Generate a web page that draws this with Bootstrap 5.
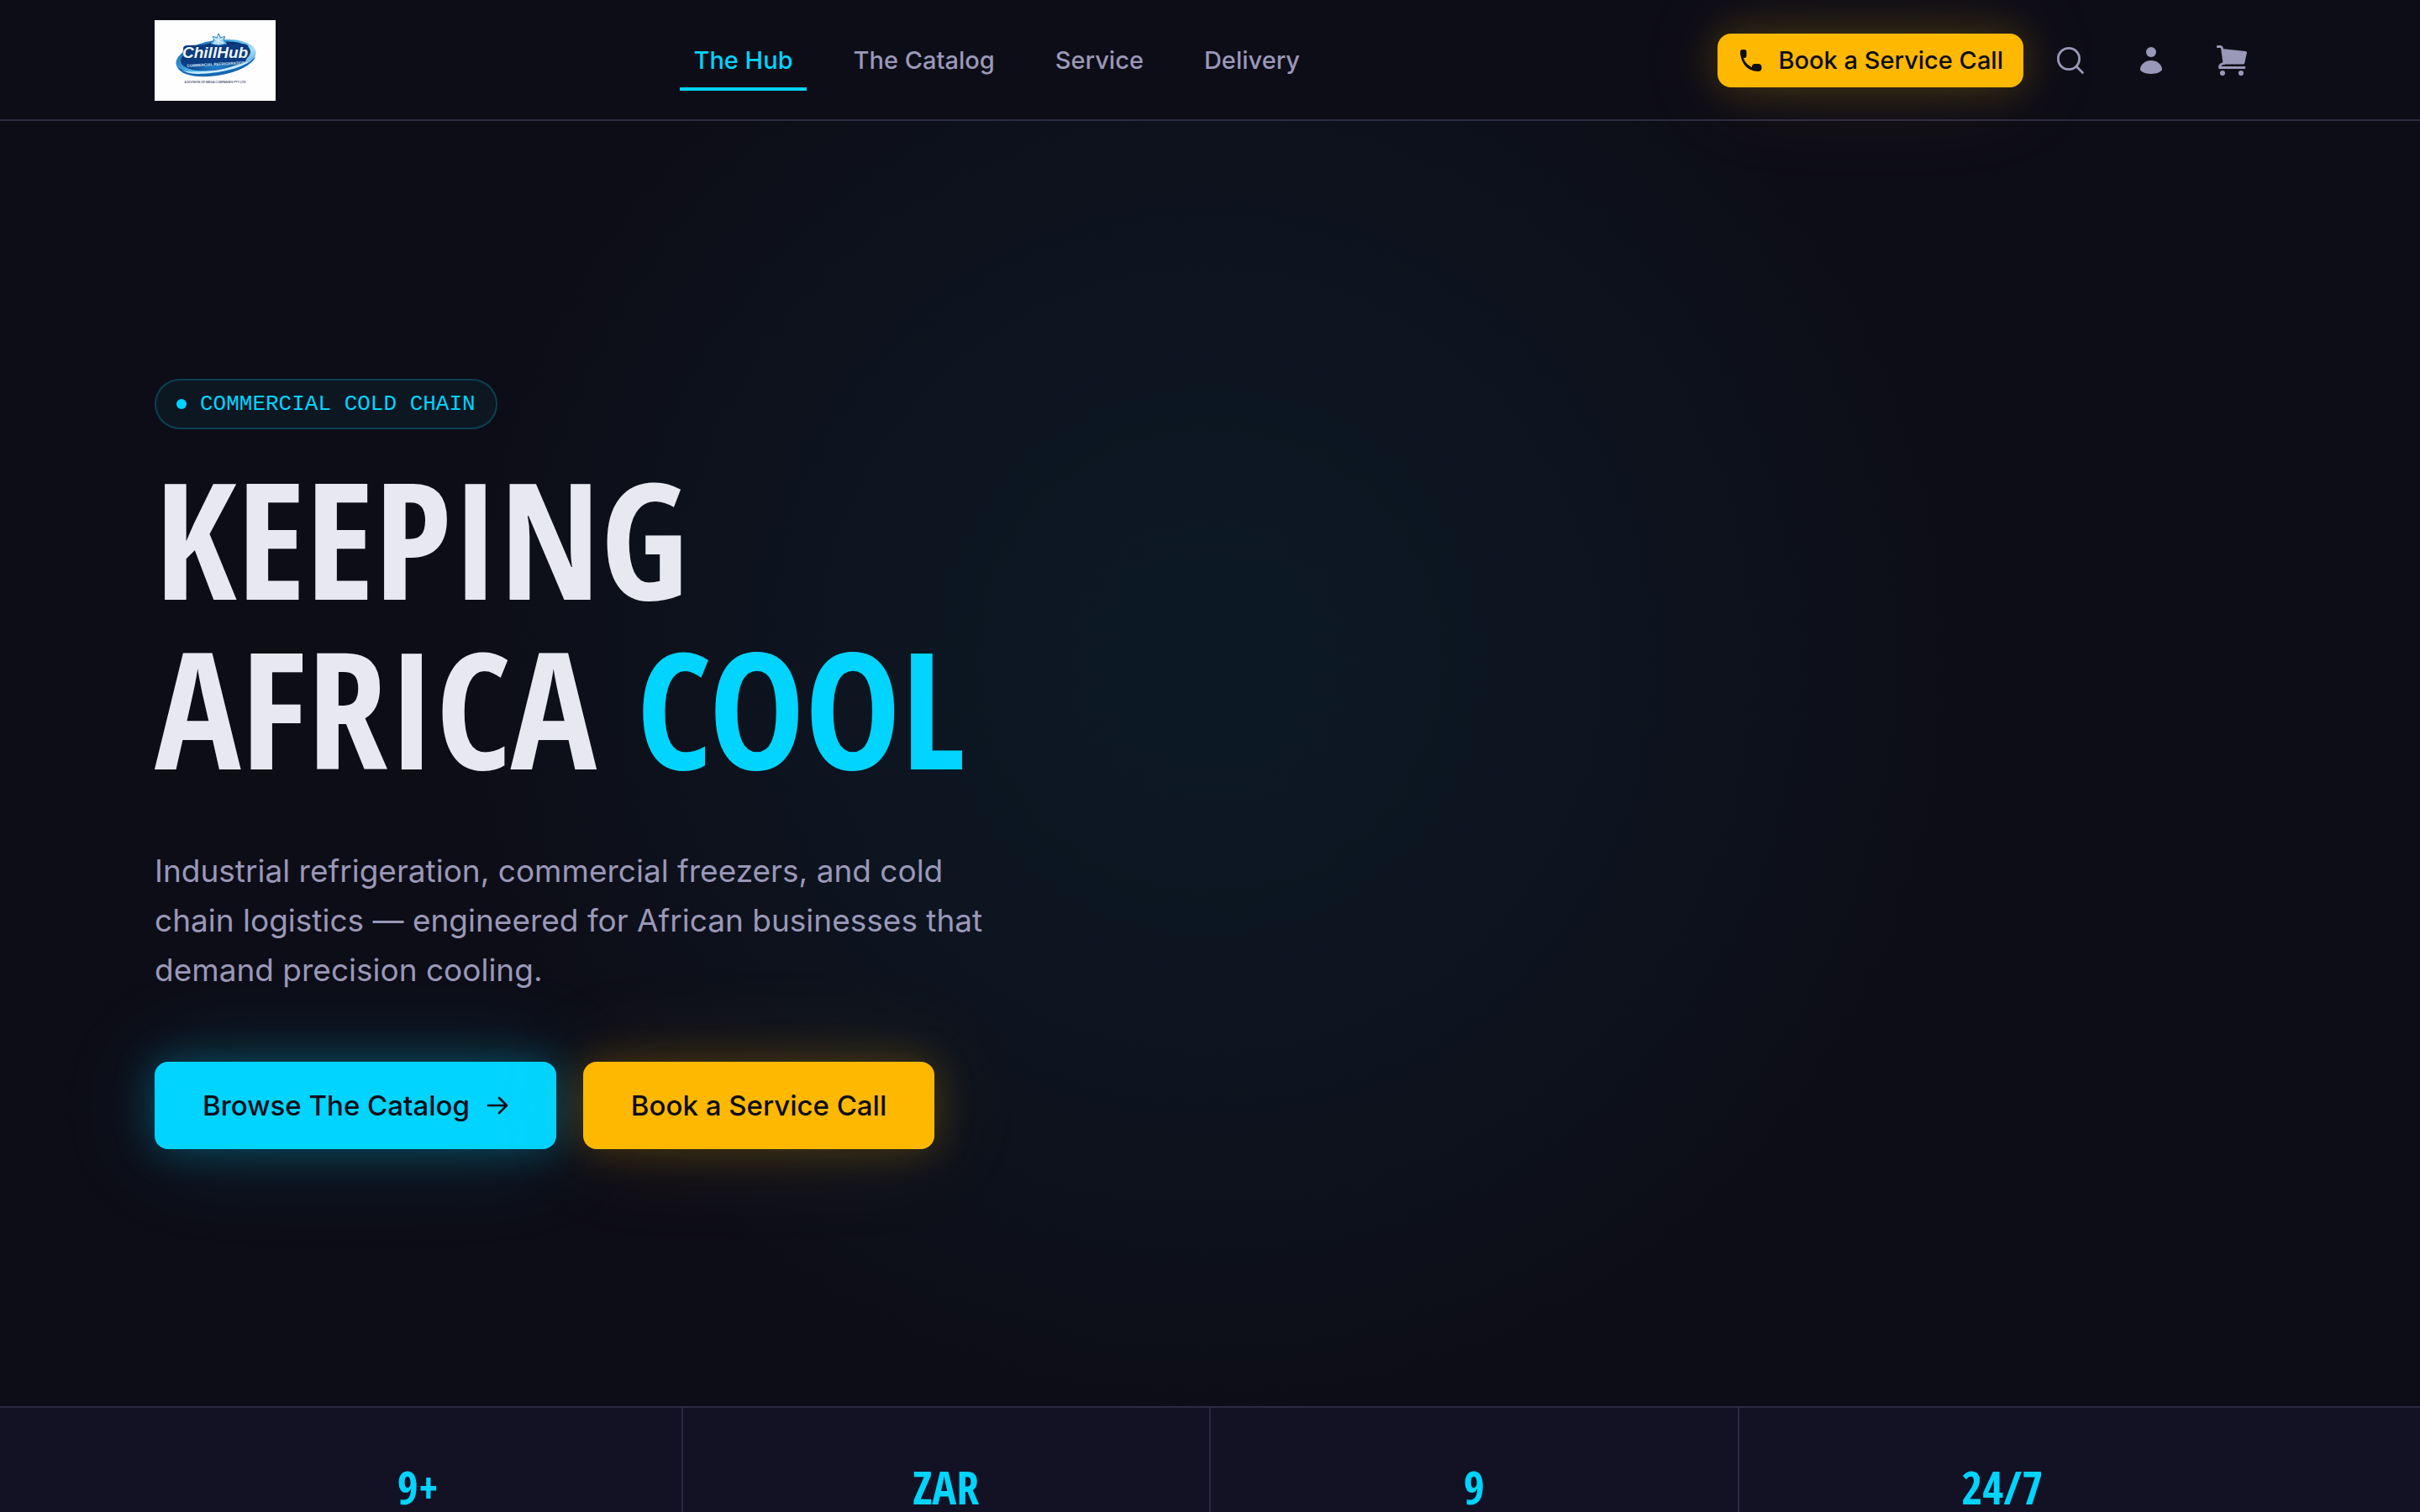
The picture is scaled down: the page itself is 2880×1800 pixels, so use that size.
<!DOCTYPE html>
<html lang="en">
<head>
<meta charset="utf-8">
<meta name="viewport" content="width=device-width, initial-scale=1">
<title>ChillHub – Commercial Refrigeration</title>
<link href="https://cdn.jsdelivr.net/npm/bootstrap@5.3.0/dist/css/bootstrap.min.css" rel="stylesheet">
<style>
  :root {
    --ink: #0d0d17;
    --panel: #121224;
    --line: #2a2a45;
    --ice: #00d4ff;
    --amber: #ffb800;
    --muted: #9a98b8;
    --display: "Open Sans Condensed", "Roboto Condensed", "Open Sans", sans-serif;
  }
  body { background: var(--ink); color: #e8e8f0; font-family: Inter, "Open Sans", sans-serif; }
  .shell { width: 100%; max-width: 2560px; margin-inline: auto; padding-inline: 24px; }

  .site-header { background: var(--ink); box-shadow: inset 0 -2px var(--line); z-index: 2; }
  .site-header .shell { padding-block: 24px; }
  .brand-tile { width: 144px; height: 96px; }
  .site-menu { gap: 40px; }
  .site-menu .nav-link { padding: 16px 16px 12px; font-size: 29px; line-height: 40px; font-weight: 500; color: var(--muted); border-bottom: 4px solid transparent; }
  .site-menu .nav-link.active { color: var(--ice); border-bottom-color: var(--ice); }

  .btn-glow { border: 0; border-radius: 16px; color: var(--ink); font-weight: 500; display: inline-flex; align-items: center; white-space: nowrap; }
  .btn-amber, .btn-amber:hover { background: var(--amber); color: var(--ink); box-shadow: 0 0 48px rgba(255,184,0,.22), 0 0 120px rgba(255,184,0,.12); }
  .btn-ice, .btn-ice:hover { background: var(--ice); color: var(--ink); box-shadow: 0 0 48px rgba(0,212,255,.28), 0 0 120px rgba(0,212,255,.16); }
  .btn-call { font-size: 29px; line-height: 40px; padding: 12px 24px; gap: 16px; }
  .btn-cta { font-size: 33px; line-height: 48px; padding: 28px 57px; gap: 20px; }
  .btn-tool { width: 80px; height: 80px; padding: 0; border: 0; color: var(--muted); display: inline-flex; align-items: center; justify-content: center; }

  .hero { min-height: 85vh; background: radial-gradient(circle at 50% 42%, rgba(0,212,255,.058), rgba(0,212,255,.05) 15%, rgba(0,212,255,.026) 34%, transparent 54%); }
  .hero-tag { border: 2px solid rgba(0,212,255,.22); background: rgba(0,212,255,.05); border-radius: 30px; padding: 8px 24px; gap: 16px; font: 26px/40px "Liberation Mono", monospace; color: var(--ice); text-transform: uppercase; margin-bottom: 28px; }
  .tag-dot { width: 12px; height: 12px; border-radius: 50%; background: var(--ice); }
  .hero-title { font-family: var(--display); font-weight: 700; font-size: 192px; line-height: 202px; margin-bottom: 64px; color: #e8e8f0; }
  .hero-title span { color: var(--ice); }
  .hero-text { max-width: 1000px; font-size: 37px; line-height: 59px; font-weight: 400; color: var(--muted); margin-bottom: 80px; }
  .hero-actions { gap: 32px; }

  .stats { background: var(--panel); border-top: 2px solid var(--line); }
  .stat-cell { padding-top: 64px; text-align: center; }
  .stat-cell:not(:last-child) { border-right: 2px solid var(--line); }
  .stat-value { font-family: var(--display); font-weight: 700; font-size: 54px; line-height: 60px; color: var(--ice); margin: 0; }
</style>
<script src="https://cdn.jsdelivr.net/npm/bootstrap@5.3.0/dist/js/bootstrap.bundle.min.js"></script>
</head>
<body class="d-flex flex-column min-vh-100">

<header class="site-header position-relative">
  <div class="shell d-flex align-items-center justify-content-between">
    <a href="#" aria-label="ChillHub home" class="d-block">
      <svg class="brand-tile d-block" viewBox="0 0 144 96">
        <defs>
          <linearGradient id="swoosh" x1="0" y1="0" x2="1" y2="1">
            <stop offset="0" stop-color="#0d4f9c"/><stop offset=".45" stop-color="#4db4ea"/><stop offset=".7" stop-color="#a9e0fa"/><stop offset="1" stop-color="#1a74c0"/>
          </linearGradient>
          <radialGradient id="core" cx=".5" cy=".85" r=".8">
            <stop offset="0" stop-color="#2384cf"/><stop offset=".5" stop-color="#0c4790"/><stop offset="1" stop-color="#0a2f6b"/>
          </radialGradient>
        </defs>
        <rect width="144" height="96" fill="#fefefe"/>
        <g transform="rotate(-9 73 45)">
          <ellipse cx="73" cy="45" rx="48" ry="21" fill="url(#swoosh)"/>
          <path d="M26 48c2 12 24 18 48 18 22 0 40-6 46-15-10 7-26 10-46 10-24 0-42-5-48-13z" fill="#1768b5"/>
          <path d="M31 53c9 8 26 9 43 9 18 0 34-3 42-9-9 4-24 6-42 6-18 0-33-1-43-6z" fill="#c7ecfc"/>
          <ellipse cx="73" cy="43" rx="42" ry="16.500" fill="url(#core)"/>
        </g>
        <path d="M34 34q0-4 5-4l66-2q8 0 7 8l-3 11q-1 4-6 5l-60 3q-6 0-7-5z" fill="#0b3b80"/>
        <path d="M76 16l2.600 4.600 5-1-1.600 4.800 4 3.600-5 1-3 .8h-4l-7-1.800 4-3.600-1.600-4.800 5 1z" fill="#9fd4f2" stroke="#2d7cbd"/>
        <path d="M76 18v11M70 21l12 7M82 21l-12 7" stroke="#eaf8ff"/>
        <text x="33" y="45" font-family="Liberation Sans" font-weight="700" font-style="italic" font-size="19" fill="#eef7fd" stroke="#0a2f6b" stroke-width="1" paint-order="stroke">ChillHub</text>
        <text x="73" y="54" text-anchor="middle" font-family="Liberation Sans" font-weight="700" font-size="4.500" fill="#d5edfb" transform="rotate(-3 73 54)">COMMERCIAL REFRIGERATION</text>
        <text x="72" y="75" text-anchor="middle" font-family="Liberation Sans" font-weight="700" font-size="3.500" fill="#55607c">A DIVISION OF MEGA COMPANIES PTY LTD</text>
      </svg>
    </a>

    <nav class="nav site-menu" aria-label="Main">
      <a class="nav-link active" aria-current="page" href="#">The Hub</a>
      <a class="nav-link" href="#">The Catalog</a>
      <a class="nav-link" href="#">Service</a>
      <a class="nav-link" href="#">Delivery</a>
    </nav>

    <div class="d-flex align-items-center gap-3">
      <button type="button" class="btn btn-glow btn-amber btn-call">
        <svg width="32" height="32" viewBox="0 0 32 32" fill="currentColor" aria-hidden="true"><path d="M3 6q0-3 3-3h2q2.500 0 2.500 2.500v4.500q0 3-2.500 3h-1.200q2.700 7.500 10.200 11.200v-1.700q.5-2.500 3-2.500h5q3.500.5 3.500 4v1.500q-.5 3.500-4.500 3.500Q6 28 3 8z"/></svg>
        Book a Service Call
      </button>
      <button type="button" class="btn btn-tool" aria-label="Search">
        <svg width="36" height="36" viewBox="0 0 36 36" fill="none" stroke="currentColor" stroke-width="2.800" stroke-linecap="round"><circle cx="16" cy="16" r="12.600"/><path d="M25.500 25.500l7 7"/></svg>
      </button>
      <button type="button" class="btn btn-tool" aria-label="Account">
        <svg width="36" height="36" viewBox="0 0 36 36" fill="currentColor"><circle cx="18" cy="8" r="6"/><path d="M18 18c7 0 13 5 13 10.500 0 2.500-6 5.500-13 5.500S5 31 5 28.500C5 23 11 18 18 18z"/></svg>
      </button>
      <button type="button" class="btn btn-tool" aria-label="Cart">
        <svg width="36" height="36" viewBox="0 0 36 36" fill="currentColor"><path d="M6 4l28.500 3q1.800.3 1.400 2l-2.600 12q-.3 1.500-2 1.500H8.500z"/><path d="M1.300 1.500h3.200q1.500 0 1.900 1.500L9 21.500q-5.500.5-5.600 5H33" fill="none" stroke="currentColor" stroke-width="2.800" stroke-linecap="round" stroke-linejoin="round"/><circle cx="7" cy="33" r="3.100"/><circle cx="29" cy="33" r="3.100"/></svg>
      </button>
    </div>
  </div>
</header>

<main class="flex-grow-1 d-flex flex-column">
  <section class="hero d-flex align-items-center">
    <div class="shell">
      <div class="hero-tag d-inline-flex align-items-center"><span class="tag-dot"></span>Commercial Cold Chain</div>
      <h1 class="hero-title">KEEPING<br>AFRICA <span>COOL</span></h1>
      <p class="hero-text">Industrial refrigeration, commercial freezers, and cold chain logistics — engineered for African businesses that demand precision cooling.</p>
      <div class="hero-actions d-flex flex-wrap">
        <a href="#" class="btn btn-glow btn-ice btn-cta">Browse The Catalog
          <svg width="26" height="26" viewBox="0 0 26 26" fill="none" stroke="currentColor" stroke-width="2.600" stroke-linecap="round" stroke-linejoin="round" aria-hidden="true"><path d="M2 13h22M15 4l9 9-9 9"/></svg>
        </a>
        <a href="#" class="btn btn-glow btn-amber btn-cta">Book a Service Call</a>
      </div>
    </div>
  </section>

  <section class="stats flex-grow-1 d-flex">
    <div class="shell d-flex">
      <div class="row g-0 w-100">
        <div class="col stat-cell"><p class="stat-value">9+</p></div>
        <div class="col stat-cell"><p class="stat-value">ZAR</p></div>
        <div class="col stat-cell"><p class="stat-value">9</p></div>
        <div class="col stat-cell"><p class="stat-value">24/7</p></div>
      </div>
    </div>
  </section>
</main>
</body>
</html>
